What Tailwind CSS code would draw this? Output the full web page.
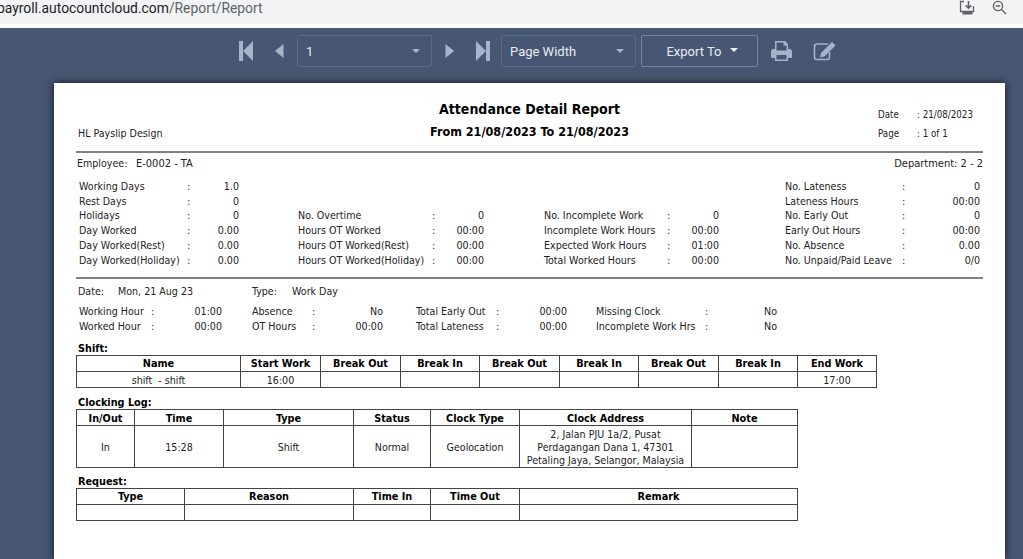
<!DOCTYPE html>
<html>
<head>
<meta charset="utf-8">
<script src="https://cdn.jsdelivr.net/npm/@tailwindcss/browser@4"></script>
</head>
<body class="m-0 h-[559px] w-[1023px] overflow-hidden bg-white font-['DejaVu_Sans_Condensed','DejaVu_Sans',sans-serif]">
<div class="flex h-[24px] items-center justify-between overflow-hidden bg-[#f1f3f4] pb-[9px] pr-[16px]">
  <div class="-ml-[3px] whitespace-nowrap font-['Roboto',sans-serif] text-[13.85px] leading-[14px] text-[#202124]">payroll.autocountcloud.com<span class="text-[#5f6368]">/Report/Report</span></div>
  <div class="flex items-center gap-[17px]">
    <svg class="h-[16px] w-[16px]" viewBox="0 0 16 16" fill="none" stroke="#5f6368" stroke-width="1.3"><path d="M5 1.5H1.5V11.5H14.5V6"/><path d="M9.5 1V8M6.8 5.4L9.5 8.2L12.2 5.4" stroke-width="1.6"/><rect x="3.5" y="12" width="10" height="2.5" fill="#5f6368" stroke="none"/></svg>
    <svg class="h-[15px] w-[15px]" viewBox="0 0 15 15" fill="none" stroke="#5f6368" stroke-width="1.4"><circle cx="6" cy="6" r="4.6"/><path d="M9.5 9.5L14 14M3.8 6H8.2"/></svg>
  </div>
</div>
<div class="h-[4px] bg-white"></div>
<div class="h-[531px] bg-[#475672]">
  <div class="flex h-[55px] items-center pb-[9px] pl-[239px] font-['Roboto',sans-serif] text-[13px] text-[#e8ecf2]">
    <svg class="h-[20px] w-[15px]" viewBox="0 0 15 20" fill="#a5b3cb"><rect x="0" y="0" width="4" height="20"/><path d="M14 0V20L4 10Z"/></svg>
    <svg class="ml-[21px] h-[14px] w-[9px]" viewBox="0 0 9 14" fill="#a5b3cb"><path d="M8.500 0V14L0 7Z"/></svg>
    <div class="ml-[13px] flex h-[32px] w-[135px] items-center justify-between rounded-[2px] border border-[#5b6a86] pl-[8px] pr-[11px]"><span class="pt-[2px]">1</span><span class="h-0 w-0 border-x-[4px] border-t-[4px] border-x-transparent border-t-[#a5b3cb]"></span></div>
    <svg class="ml-[13px] h-[14px] w-[9px]" viewBox="0 0 9 14" fill="#a5b3cb"><path d="M0.500 0V14L9 7Z"/></svg>
    <svg class="ml-[21px] h-[20px] w-[15px]" viewBox="0 0 15 20" fill="#a5b3cb"><rect x="11" y="0" width="4" height="20"/><path d="M1 0V20L11 10Z"/></svg>
    <div class="ml-[11px] flex h-[32px] w-[135px] items-center justify-between rounded-[2px] border border-[#5b6a86] pl-[8px] pr-[11px]"><span class="pt-[2px]">Page Width</span><span class="h-0 w-0 border-x-[4px] border-t-[4px] border-x-transparent border-t-[#a5b3cb]"></span></div>
    <div class="ml-[5px] flex h-[32px] w-[117px] items-center justify-center gap-[8px] rounded-[2px] border border-[#76849e] pl-[5px]"><span class="pt-[2px]">Export To</span><span class="mb-[3px] h-0 w-0 border-x-[4px] border-t-[4px] border-x-transparent border-t-[#eef1f5]"></span></div>
    <svg class="ml-[13px] h-[20px] w-[21px]" viewBox="0 0 21 20" fill="#a5b3cb"><path fill-rule="evenodd" d="M4 0H14L17 3V8H18.500C20 8 21 9 21 10.500V15.500C21 16.500 20.500 17 19.500 17H17V20H4V17H1.500C.5 17 0 16.500 0 15.500V10.500C0 9 1 8 2.500 8H4ZM5.500 1.500V9.500H15.500V4.500H12.500V1.500ZM5.500 14V18.500H15.500V14Z"/></svg>
    <svg class="ml-[21px] h-[20px] w-[23px]" viewBox="0 0 23 20" fill="none" stroke="#a5b3cb" stroke-width="1.600"><path d="M15 3H4C2.500 3 1.500 4 1.500 5.500V16C1.500 17.500 2.500 18.500 4 18.500H14C15.500 18.500 16.500 17.500 16.500 16V11"/><path fill="#a5b3cb" stroke="none" d="M19 1L22.500 4.500L11.500 15.500L7 16.500L8 12Z"/></svg>
  </div>
  <div class="ml-[54px] h-[476px] w-[951px] whitespace-nowrap bg-white px-[22px] text-[10.6px] text-[#222] shadow-[0_0_8px_rgba(0,0,0,0.75)]">
    <div class="flex h-[68px]">
      <div class="w-[250px] pl-[2px] pt-[43px] leading-[14px]">HL Payslip Design</div>
      <div class="flex-1 pt-[17px] text-center font-bold text-black">
        <div class="text-[14px] leading-[18px]">Attendance Detail Report</div>
        <div class="mt-[6px] text-[12.5px] leading-[16px]">From 21/08/2023 To 21/08/2023</div>
      </div>
      <div class="w-[250px] pl-[145px] pt-[25px] text-[9.7px] leading-[14px]">
        <div class="flex"><span class="w-[39px]">Date</span><span>: 21/08/2023</span></div>
        <div class="mt-[5px] flex"><span class="w-[39px]">Page</span><span>: 1 of 1</span></div>
      </div>
    </div>
    <div class="h-[2px] bg-[#808080]"></div>
    <div class="flex h-[22px] items-center justify-between pl-[1px] pt-[1px]"><div class="flex"><span class="w-[59px]">Employee:</span><span class="text-[11px]">E-0002 - TA</span></div><span class="text-[11px]">Department: 2 - 2</span></div>
    <div class="mt-[4px] flex h-[88px] pl-[3px] leading-[15px]">
      <div class="grid w-[160px] grid-cols-[108px_auto_1fr] grid-rows-[15px_14px_15px_15px_15px_15px] items-center">
        <span>Working Days</span><span>:</span><span class="text-right">1.0</span>
        <span>Rest Days</span><span>:</span><span class="text-right">0</span>
        <span>Holidays</span><span>:</span><span class="text-right">0</span>
        <span>Day Worked</span><span>:</span><span class="text-right">0.00</span>
        <span>Day Worked(Rest)</span><span>:</span><span class="text-right">0.00</span>
        <span>Day Worked(Holiday)</span><span>:</span><span class="text-right">0.00</span>
      </div>
      <div class="ml-[59px] grid w-[186px] grid-cols-[134px_auto_1fr] grid-rows-[15px_14px_15px_15px_15px_15px] items-center">
        <span class="col-span-3"></span><span class="col-span-3"></span>
        <span>No. Overtime</span><span>:</span><span class="text-right">0</span>
        <span>Hours OT Worked</span><span>:</span><span class="text-right">00:00</span>
        <span>Hours OT Worked(Rest)</span><span>:</span><span class="text-right">00:00</span>
        <span>Hours OT Worked(Holiday)</span><span>:</span><span class="text-right">00:00</span>
      </div>
      <div class="ml-[60px] grid w-[175px] grid-cols-[123px_auto_1fr] grid-rows-[15px_14px_15px_15px_15px_15px] items-center">
        <span class="col-span-3"></span><span class="col-span-3"></span>
        <span>No. Incomplete Work</span><span>:</span><span class="text-right">0</span>
        <span>Incomplete Work Hours</span><span>:</span><span class="text-right">00:00</span>
        <span>Expected Work Hours</span><span>:</span><span class="text-right">01:00</span>
        <span>Total Worked Hours</span><span>:</span><span class="text-right">00:00</span>
      </div>
      <div class="ml-[66px] grid w-[195px] grid-cols-[117px_auto_1fr] grid-rows-[15px_14px_15px_15px_15px_15px] items-center">
        <span>No. Lateness</span><span>:</span><span class="text-right">0</span>
        <span>Lateness Hours</span><span>:</span><span class="text-right">00:00</span>
        <span>No. Early Out</span><span>:</span><span class="text-right">0</span>
        <span>Early Out Hours</span><span>:</span><span class="text-right">00:00</span>
        <span>No. Absence</span><span>:</span><span class="text-right">0.00</span>
        <span>No. Unpaid/Paid Leave</span><span>:</span><span class="text-right">0/0</span>
      </div>
    </div>
    <div class="mt-[10px] h-[2px] bg-[#808080]"></div>
    <div class="flex h-[25px] items-center pl-[2px] pt-[1px]"><span class="w-[40px]">Date:</span><span class="w-[134px]">Mon, 21 Aug 23</span><span class="w-[40px]">Type:</span><span>Work Day</span></div>
    <div class="flex h-[30px] pl-[3px] leading-[15px]">
      <div class="grid w-[143px] grid-cols-[72px_auto_1fr] grid-rows-2"><span>Working Hour</span><span>:</span><span class="text-right">01:00</span><span>Worked Hour</span><span>:</span><span class="text-right">00:00</span></div>
      <div class="ml-[30px] grid w-[131px] grid-cols-[60px_auto_1fr] grid-rows-2"><span>Absence</span><span>:</span><span class="text-right">No</span><span>OT Hours</span><span>:</span><span class="text-right">00:00</span></div>
      <div class="ml-[33px] grid w-[151px] grid-cols-[80px_auto_1fr] grid-rows-2"><span>Total Early Out</span><span>:</span><span class="text-right">00:00</span><span>Total Lateness</span><span>:</span><span class="text-right">00:00</span></div>
      <div class="ml-[29px] grid w-[181px] grid-cols-[109px_auto_1fr] grid-rows-2"><span>Missing Clock</span><span>:</span><span class="text-right">No</span><span>Incomplete Work Hrs</span><span>:</span><span class="text-right">No</span></div>
    </div>

    <div class="mt-[7px] h-[14px] pl-[2px] pt-[1px] text-[10.8px] font-bold leading-[14px] text-black">Shift:</div>
    <table class="w-[801px] table-fixed border-collapse border border-[#444] text-center leading-[14px]">
      <colgroup><col class="w-[164px]"><col class="w-[80px]"><col class="w-[80px]"><col class="w-[79px]"><col class="w-[80px]"><col class="w-[79px]"><col class="w-[80px]"><col class="w-[79px]"><col class="w-[79px]"></colgroup>
      <tr class="h-[16px] text-[10.8px] font-bold text-black"><th class="border border-[#444] p-0 pt-[1px]">Name</th><th class="border border-[#444] p-0 pt-[1px]">Start Work</th><th class="border border-[#444] p-0 pt-[1px]">Break Out</th><th class="border border-[#444] p-0 pt-[1px]">Break In</th><th class="border border-[#444] p-0 pt-[1px]">Break Out</th><th class="border border-[#444] p-0 pt-[1px]">Break In</th><th class="border border-[#444] p-0 pt-[1px]">Break Out</th><th class="border border-[#444] p-0 pt-[1px]">Break In</th><th class="border border-[#444] p-0 pt-[1px]">End Work</th></tr>
      <tr class="h-[16px]"><td class="whitespace-pre border border-[#444] p-0">shift  - shift</td><td class="border border-[#444] p-0">16:00</td><td class="border border-[#444] p-0"></td><td class="border border-[#444] p-0"></td><td class="border border-[#444] p-0"></td><td class="border border-[#444] p-0"></td><td class="border border-[#444] p-0"></td><td class="border border-[#444] p-0"></td><td class="border border-[#444] p-0">17:00</td></tr>
    </table>

    <div class="mt-[7px] h-[14px] pl-[2px] pt-[1px] text-[10.8px] font-bold leading-[14px] text-black">Clocking Log:</div>
    <table class="w-[722px] table-fixed border-collapse border border-[#444] text-center leading-[13px]">
      <colgroup><col class="w-[58px]"><col class="w-[89px]"><col class="w-[130px]"><col class="w-[77px]"><col class="w-[89px]"><col class="w-[172px]"><col class="w-[106px]"></colgroup>
      <tr class="h-[16px] text-[10.8px] font-bold text-black"><th class="border border-[#444] p-0 pt-[1px]">In/Out</th><th class="border border-[#444] p-0 pt-[1px]">Time</th><th class="border border-[#444] p-0 pt-[1px]">Type</th><th class="border border-[#444] p-0 pt-[1px]">Status</th><th class="border border-[#444] p-0 pt-[1px]">Clock Type</th><th class="border border-[#444] p-0 pt-[1px]">Clock Address</th><th class="border border-[#444] p-0 pt-[1px]">Note</th></tr>
      <tr class="h-[42px]"><td class="border border-[#444] p-0 pt-[1px]">In</td><td class="border border-[#444] p-0 pt-[1px]">15:28</td><td class="border border-[#444] p-0 pt-[1px]">Shift</td><td class="border border-[#444] p-0 pt-[1px]">Normal</td><td class="border border-[#444] p-0 pt-[1px]">Geolocation</td><td class="border border-[#444] p-0 pt-[1px]">2, Jalan PJU 1a/2, Pusat<br>Perdagangan Dana 1, 47301<br>Petaling Jaya, Selangor, Malaysia</td><td class="border border-[#444] p-0"></td></tr>
    </table>

    <div class="mt-[6px] h-[14px] pl-[2px] pt-[1px] text-[10.8px] font-bold leading-[14px] text-black">Request:</div>
    <table class="w-[722px] table-fixed border-collapse border border-[#444] text-center leading-[14px]">
      <colgroup><col class="w-[108px]"><col class="w-[169px]"><col class="w-[77px]"><col class="w-[89px]"><col class="w-[278px]"></colgroup>
      <tr class="h-[16px] text-[10.8px] font-bold text-black"><th class="border border-[#444] p-0 pt-[1px]">Type</th><th class="border border-[#444] p-0 pt-[1px]">Reason</th><th class="border border-[#444] p-0 pt-[1px]">Time In</th><th class="border border-[#444] p-0 pt-[1px]">Time Out</th><th class="border border-[#444] p-0 pt-[1px]">Remark</th></tr>
      <tr class="h-[16px]"><td class="border border-[#444] p-0"></td><td class="border border-[#444] p-0"></td><td class="border border-[#444] p-0"></td><td class="border border-[#444] p-0"></td><td class="border border-[#444] p-0"></td></tr>
    </table>
  </div>
</div>
</body>
</html>
